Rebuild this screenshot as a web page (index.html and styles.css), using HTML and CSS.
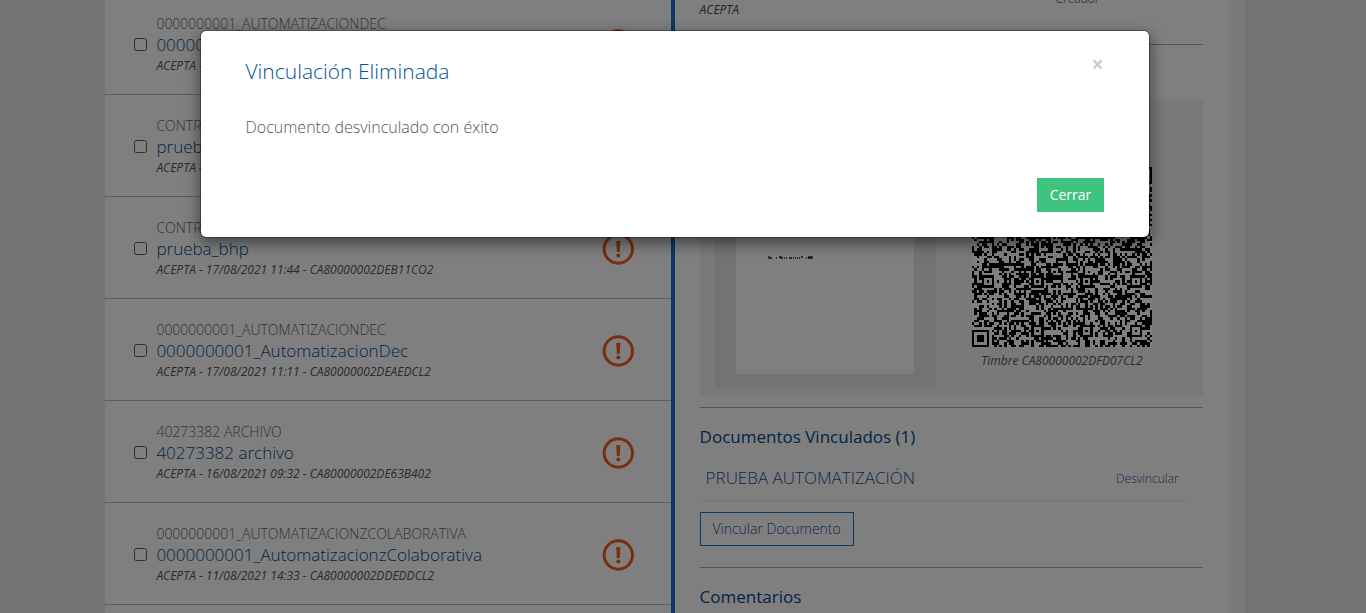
FILE: index.html
```html
<!DOCTYPE html>
<html lang="es">
<head>
<meta charset="utf-8">
<title>Documentos</title>
<link rel="stylesheet" href="styles.css">
</head>
<body>
<div class="page">
  <main class="shell">
    <section class="list">
      <article class="row"><input type="checkbox" class="check"><div class="info"><div class="type">0000000001_AUTOMATIZACIONDEC</div><a class="name">00000</a><div class="meta">ACEPTA -</div></div><svg class="alert" viewBox="0 0 32 32"><circle cx="16.3" cy="16" r="14.2"/><path d="M14.2 8h4.2l-.7 11h-2.8z"/><circle class="dot" cx="16.3" cy="22.6" r="2"/></svg></article>
      <article class="row"><input type="checkbox" class="check"><div class="info"><div class="type">CONTR</div><a class="name">prueba</a><div class="meta">ACEPTA -</div></div><svg class="alert" viewBox="0 0 32 32"><circle cx="16.3" cy="16" r="14.2"/><path d="M14.2 8h4.2l-.7 11h-2.8z"/><circle class="dot" cx="16.3" cy="22.6" r="2"/></svg></article>
      <article class="row"><input type="checkbox" class="check"><div class="info"><div class="type">CONTRATO</div><a class="name">prueba_bhp</a><div class="meta">ACEPTA - 17/08/2021 11:44 - CA80000002DEB11CO2</div></div><svg class="alert" viewBox="0 0 32 32"><circle cx="16.3" cy="16" r="14.2"/><path d="M14.2 8h4.2l-.7 11h-2.8z"/><circle class="dot" cx="16.3" cy="22.6" r="2"/></svg></article>
      <article class="row"><input type="checkbox" class="check"><div class="info"><div class="type">0000000001_AUTOMATIZACIONDEC</div><a class="name">0000000001_AutomatizacionDec</a><div class="meta">ACEPTA - 17/08/2021 11:11 - CA80000002DEAEDCL2</div></div><svg class="alert" viewBox="0 0 32 32"><circle cx="16.3" cy="16" r="14.2"/><path d="M14.2 8h4.2l-.7 11h-2.8z"/><circle class="dot" cx="16.3" cy="22.6" r="2"/></svg></article>
      <article class="row"><input type="checkbox" class="check"><div class="info"><div class="type">40273382 ARCHIVO</div><a class="name">40273382 archivo</a><div class="meta">ACEPTA - 16/08/2021 09:32 - CA80000002DE63B402</div></div><svg class="alert" viewBox="0 0 32 32"><circle cx="16.3" cy="16" r="14.2"/><path d="M14.2 8h4.2l-.7 11h-2.8z"/><circle class="dot" cx="16.3" cy="22.6" r="2"/></svg></article>
      <article class="row"><input type="checkbox" class="check"><div class="info"><div class="type">0000000001_AUTOMATIZACIONZCOLABORATIVA</div><a class="name">0000000001_AutomatizacionzColaborativa</a><div class="meta">ACEPTA - 11/08/2021 14:33 - CA80000002DDEDDCL2</div></div><svg class="alert" viewBox="0 0 32 32"><circle cx="16.3" cy="16" r="14.2"/><path d="M14.2 8h4.2l-.7 11h-2.8z"/><circle class="dot" cx="16.3" cy="22.6" r="2"/></svg></article>
    </section>
    <section class="detail">
      <div class="signer"><span class="company">ACEPTA</span><span class="role">Creador</span></div>
      <div class="preview">
        <div class="thumb"><div class="sheet"><svg class="scribble" viewBox="0 0 46 4"><path d="M1 0v3M2 2h2M8 2h1M11 1h2v1h2M16 2h1M18 2h1M21 2h3M25 2h1M27 2h1M29 2h1M31 2h1M34 0v2M38 2h1M40 1h4v1h-4"/></svg></div></div>
        <div class="stamp"><svg class="qr" id="qr" viewBox="0 0 73 73"></svg><div class="code">Timbre CA80000002DFD07CL2</div></div>
      </div>
      <div class="linked">
        <h2>Documentos Vinculados (1)</h2>
        <div class="link-row"><a class="doc">PRUEBA AUTOMATIZACIÓN</a><a class="unlink">Desvincular</a></div>
        <button class="outline">Vincular Documento</button>
      </div>
      <h2 class="comments">Comentarios</h2>
    </section>
  </main>
  <div class="overlay">
    <div class="dialog">
      <header class="head"><h1>Vinculación Eliminada</h1><button class="close">×</button></header>
      <p class="message">Documento desvinculado con éxito</p>
      <footer class="foot"><button class="primary">Cerrar</button></footer>
    </div>
  </div>
</div>
<script src="qr.js"></script>
</body>
</html>
```
FILE: styles.css
```css
* { box-sizing: border-box; }
body { margin: 0; font-family: "Open Sans", "Liberation Sans", sans-serif; font-weight: 300; background: #e6e6e6; }
button { font-family: inherit; font-weight: inherit; }
h1, h2, p { margin: 0; }
.page { position: relative; height: 613px; overflow: hidden; }
.shell { display: flex; width: 1140px; height: 613px; margin-left: 105px; padding-right: 17px; background: #f4f4f4; overflow: hidden; }
.list { width: 570px; flex: none; background: #fff; border-right: 4px solid #1c70ca; }
.row { display: flex; height: 102px; padding: 0 37px 0 29px; border-bottom: 1px solid #bbb; }
.row:first-child { height: 95px; }
.row .check { appearance: none; width: 13px; height: 13px; margin: 45px 9.4px 0 0; border: 1px solid #5c5c5c; border-radius: 2.5px; background: #fff; flex: none; }
.row:first-child .check { margin-top: 38px; }
.info { flex: 1; padding-top: 20px; white-space: nowrap; }
.row:first-child .info { margin-top: -7px; }
.type { font-size: 14px; line-height: 21px; color: #666; }
.name { display: block; font-size: 17px; line-height: 21px; color: #004a8a; }
.meta { margin-top: 2px; font-size: 12px; line-height: 18px; font-style: italic; font-weight: 400; color: #555; }
.alert { width: 32px; height: 32px; margin-top: 36px; flex: none; }
.row:first-child .alert { margin-top: 29px; }
.alert circle { fill: none; stroke: #f45a1e; stroke-width: 3; }
.alert path, .alert .dot { fill: #f45a1e; stroke: none; }
.detail { flex: 1; padding: 0 25px 0 24.6px; background: #fff; }
.signer { display: flex; height: 45px; border-bottom: 1px solid #aaa; font-size: 12px; line-height: 18px; color: #444; }
.company { width: 356px; padding-top: 1px; font-style: italic; font-weight: 400; }
.role { margin-top: -10px; }
.preview { display: flex; height: 298px; margin-top: 54px; padding: 10px 15px; background: #f2f2f2; }
.thumb { width: 221px; padding: 13px 22px 13px 21px; background: #e6e6e6; }
.sheet { height: 252px; padding: 134px 32px 0; background: #fff; }
.scribble { display: block; width: 46px; height: 4px; overflow: visible; }
.scribble path { fill: none; stroke: #222; stroke-width: 1.4; }
.stamp { width: 180px; margin-left: 36.4px; padding-top: 58px; text-align: center; }
.qr { display: block; width: 180px; height: 180px; background: #fff; shape-rendering: crispEdges; }
.code { margin-top: 5px; font-size: 12px; line-height: 18px; font-style: italic; font-weight: 400; color: #555; white-space: nowrap; }
.linked { height: 161px; margin-top: 10px; border-top: 1px solid #aaa; border-bottom: 1px solid #aaa; }
h2 { font-size: 17px; line-height: 24px; font-weight: 400; color: #004a8a; }
.linked h2 { margin-top: 17px; }
.link-row { display: flex; justify-content: space-between; align-items: center; width: 488px; height: 45px; margin-top: 8px; padding: 0 9px 0 6px; border-bottom: 2px solid #f0f0f0; color: #1c5298; }
.doc { padding-bottom: 2px; font-size: 17px; }
.unlink { font-size: 12px; }
.outline { display: block; width: 154px; height: 34px; margin-top: 10px; padding: 0 0 2px; border: 1px solid #1c70ca; background: #fff; color: #1c5298; font-size: 14px; }
.comments { margin-top: 17px; }
.overlay { position: absolute; inset: 0; background: rgba(0,0,0,.5); }
.dialog { width: 950px; height: 208px; margin: 30px 0 0 200px; padding: 25px 45px 25px 44.5px; background: #fff; background-clip: padding-box; border: 1px solid rgba(0,0,0,.3); border-radius: 6px; box-shadow: 0 5px 15px rgba(0,0,0,.5); }
.head { display: flex; justify-content: space-between; align-items: flex-start; height: 58px; }
.head h1 { font-size: 21px; line-height: 31px; font-weight: 300; color: #00549a; }
.close { margin: -2px 0 0; padding: 0 .5px 0 0; border: 0; background: none; font-size: 21px; line-height: 21px; font-weight: 700; color: #ccc; }
.message { height: 64px; font-size: 16px; line-height: 26px; color: #555; }
.foot { display: flex; justify-content: flex-end; }
.primary { width: 67px; height: 34px; padding: 0 0 2px; border: 0; background: #3fc380; color: #fff; font-size: 14px; font-weight: 400; }
```
FILE: qr.js
```js
// Draws the stamp's 73-module symbol with finder and alignment patterns.
const size = 73;
const anchors = [6, 26, 46, 66];
let seed = 20210817;
const bit = () => {
  seed = (Math.imul(seed, 1664525) + 1013904223) >>> 0;
  return (seed >>> 16) % 100 < 50;
};
const ring = (x, y, cx, cy) => Math.max(Math.abs(x - cx), Math.abs(y - cy));
const dark = (x, y) => {
  for (const [cx, cy] of [[3, 3], [69, 3], [3, 69]]) {
    const r = ring(x, y, cx, cy);
    if (r <= 4) return r < 2 || r === 3;
  }
  for (const cx of anchors) for (const cy of anchors) {
    const corner = (cx === 6 && cy !== 26 && cy !== 46) || (cx === 66 && cy === 6);
    const r = ring(x, y, cx, cy);
    if (!corner && r <= 2) return r !== 1;
  }
  if (x === 6 || y === 6) return (x + y) % 2 === 0;
  return bit();
};
let d = "";
for (let y = 0; y < size; y++) for (let x = 0; x < size; x++) if (dark(x, y)) d += `M${x} ${y}h1v1h-1z`;
const path = document.createElementNS("http://www.w3.org/2000/svg", "path");
path.setAttribute("d", d);
document.getElementById("qr").appendChild(path);
```
